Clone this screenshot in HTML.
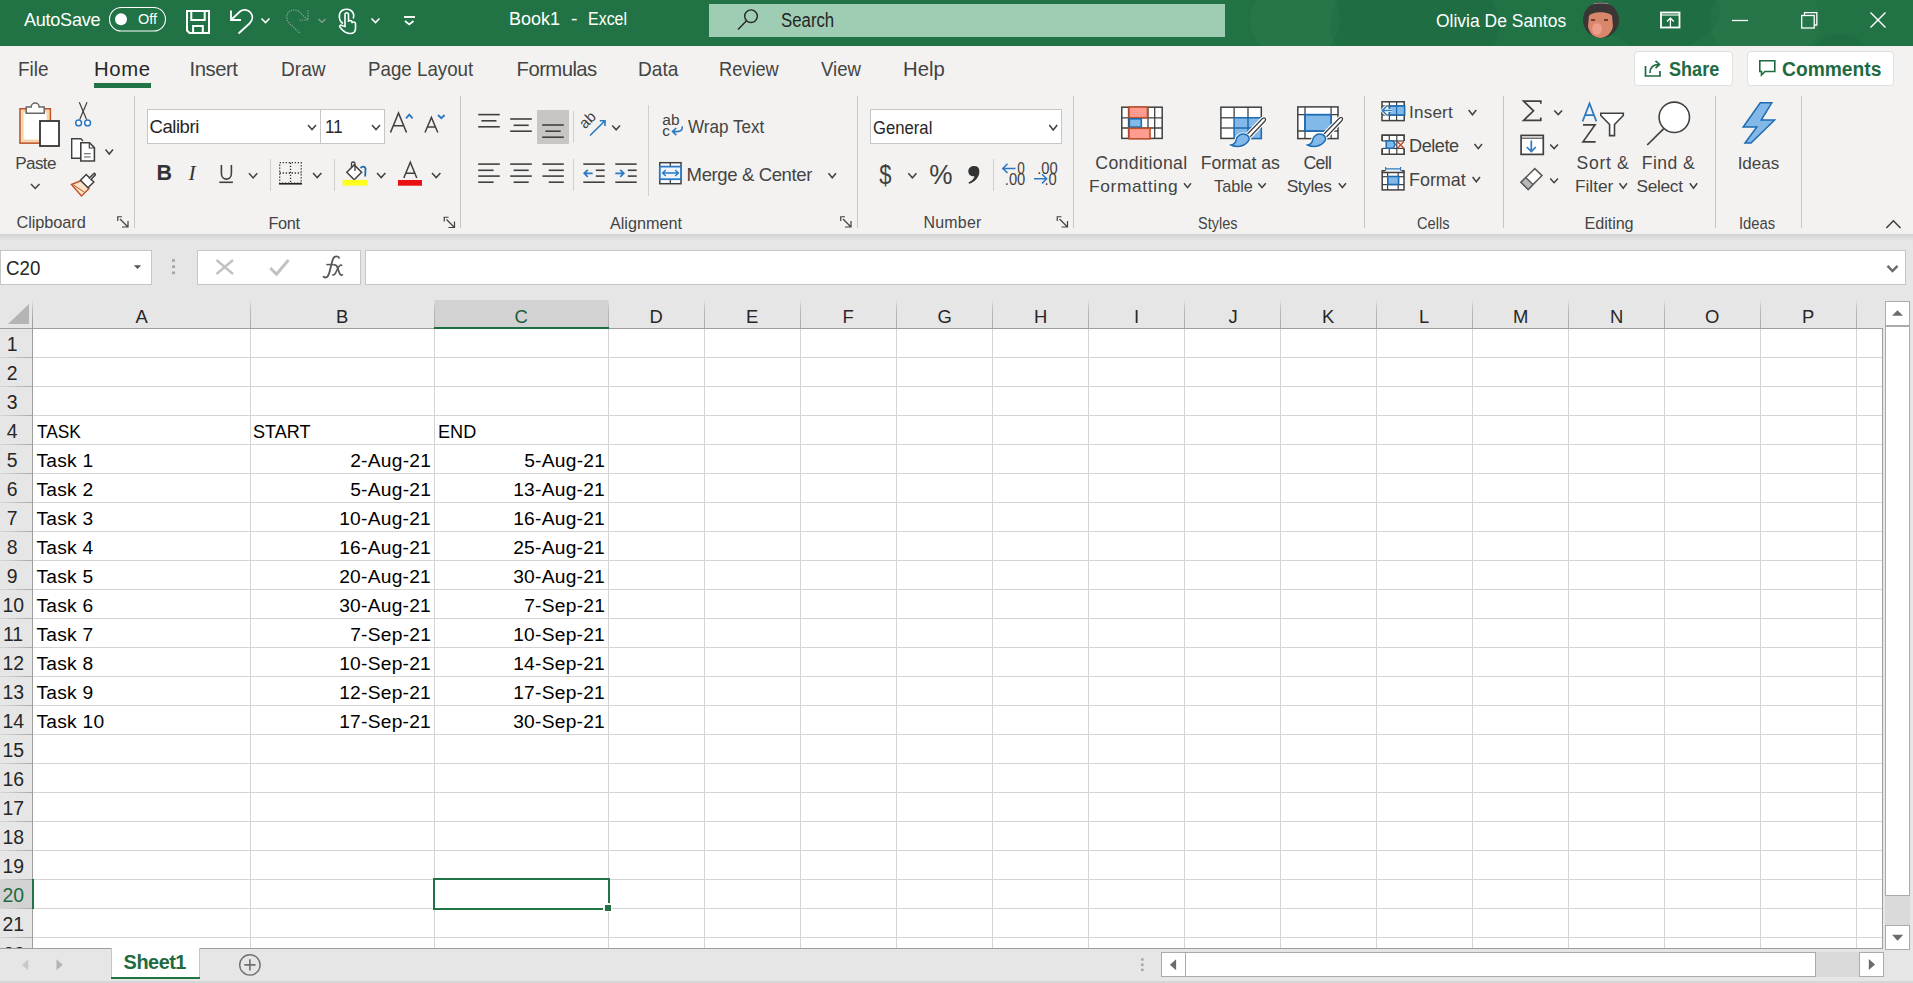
<!DOCTYPE html><html><head><meta charset="utf-8"><title>Book1 - Excel</title><style>html,body{margin:0;padding:0;width:1913px;height:983px;overflow:hidden;position:relative;background:#e6e6e6;font-family:"Liberation Sans",sans-serif}.t{position:absolute;white-space:pre}svg{position:absolute;overflow:visible}</style></head><body>
<div style="position:absolute;left:0px;top:0px;width:1913px;height:46px;background:#217346"></div>
<div style="position:absolute;left:1230px;top:0;width:683px;height:46px;overflow:hidden"><div style="position:absolute;left:20px;top:-20px;width:90px;height:80px;border-radius:50%;background:rgba(255,255,255,0.025)"></div><div style="position:absolute;left:100px;top:-30px;width:170px;height:110px;border-radius:50%;background:rgba(0,0,0,0.04)"></div><div style="position:absolute;left:370px;top:-30px;width:120px;height:80px;border-radius:50%;background:rgba(0,0,0,0.04)"></div><div style="position:absolute;left:480px;top:-25px;width:110px;height:90px;border-radius:50%;background:rgba(255,255,255,0.025)"></div><div style="position:absolute;left:585px;top:34px;width:50px;height:30px;border-radius:50%;background:rgba(0,0,0,0.04)"></div></div>
<div style="position:absolute;left:709px;top:4px;width:516px;height:33px;background:#9fcdb3"></div>
<div style="position:absolute;left:0px;top:46px;width:1913px;height:188px;background:#f3f2f1"></div>
<div style="position:absolute;left:0px;top:234px;width:1913px;height:7px;background:linear-gradient(#d2d2d2,#e6e6e6)"></div>
<div style="position:absolute;left:0px;top:241px;width:1913px;height:59px;background:#e6e6e6"></div>
<div style="position:absolute;left:134px;top:96px;width:1px;height:132px;background:#c8c6c4"></div>
<div style="position:absolute;left:460px;top:96px;width:1px;height:132px;background:#c8c6c4"></div>
<div style="position:absolute;left:857px;top:96px;width:1px;height:132px;background:#c8c6c4"></div>
<div style="position:absolute;left:1073px;top:96px;width:1px;height:132px;background:#c8c6c4"></div>
<div style="position:absolute;left:1364px;top:96px;width:1px;height:132px;background:#c8c6c4"></div>
<div style="position:absolute;left:1503px;top:96px;width:1px;height:132px;background:#c8c6c4"></div>
<div style="position:absolute;left:1715px;top:96px;width:1px;height:132px;background:#c8c6c4"></div>
<div style="position:absolute;left:1801px;top:96px;width:1px;height:132px;background:#c8c6c4"></div>
<div style="position:absolute;left:1634px;top:51px;width:99px;height:35px;background:#fff;border:1px solid #e1dfdd;border-radius:4px;box-sizing:border-box"></div>
<div style="position:absolute;left:1747px;top:51px;width:147px;height:35px;background:#fff;border:1px solid #e1dfdd;border-radius:4px;box-sizing:border-box"></div>
<div style="position:absolute;left:147px;top:109px;width:174px;height:35px;background:#fff;border:1px solid #c8c6c4;box-sizing:border-box"></div>
<div style="position:absolute;left:320px;top:109px;width:65px;height:35px;background:#fff;border:1px solid #c8c6c4;box-sizing:border-box"></div>
<div style="position:absolute;left:870px;top:109px;width:192px;height:35px;background:#fff;border:1px solid #c8c6c4;box-sizing:border-box"></div>
<div style="position:absolute;left:537px;top:110px;width:32px;height:34px;background:#c8c6c4"></div>
<div style="position:absolute;left:270px;top:159px;width:1px;height:32px;background:#d2d0ce"></div>
<div style="position:absolute;left:334px;top:159px;width:1px;height:32px;background:#d2d0ce"></div>
<div style="position:absolute;left:573px;top:111px;width:1px;height:32px;background:#d2d0ce"></div>
<div style="position:absolute;left:573px;top:159px;width:1px;height:32px;background:#d2d0ce"></div>
<div style="position:absolute;left:648px;top:105px;width:1px;height:91px;background:#d2d0ce"></div>
<div style="position:absolute;left:993px;top:159px;width:1px;height:32px;background:#d2d0ce"></div>
<div style="position:absolute;left:0px;top:250px;width:152px;height:35px;background:#fff;border:1px solid #c6c6c6;box-sizing:border-box"></div>
<div style="position:absolute;left:197px;top:250px;width:164px;height:35px;background:#fff;border:1px solid #c6c6c6;box-sizing:border-box"></div>
<div style="position:absolute;left:365px;top:250px;width:1541px;height:35px;background:#fff;border:1px solid #c6c6c6;box-sizing:border-box"></div>
<div style="position:absolute;left:33px;top:329px;width:1849px;height:619px;background:#fff"></div>
<div style="position:absolute;left:0px;top:300px;width:1882px;height:28px;background:#e6e6e6"></div>
<div style="position:absolute;left:434px;top:300px;width:175px;height:28px;background:#d2d2d2"></div>
<div style="position:absolute;left:0px;top:329px;width:32px;height:619px;background:#e6e6e6"></div>
<div style="position:absolute;left:0px;top:880px;width:32px;height:28px;background:#d2d2d2"></div>
<div style="position:absolute;left:250px;top:329px;width:1px;height:619px;background:#d4d4d4"></div>
<div style="position:absolute;left:434px;top:329px;width:1px;height:619px;background:#d4d4d4"></div>
<div style="position:absolute;left:608px;top:329px;width:1px;height:619px;background:#d4d4d4"></div>
<div style="position:absolute;left:704px;top:329px;width:1px;height:619px;background:#d4d4d4"></div>
<div style="position:absolute;left:800px;top:329px;width:1px;height:619px;background:#d4d4d4"></div>
<div style="position:absolute;left:896px;top:329px;width:1px;height:619px;background:#d4d4d4"></div>
<div style="position:absolute;left:992px;top:329px;width:1px;height:619px;background:#d4d4d4"></div>
<div style="position:absolute;left:1088px;top:329px;width:1px;height:619px;background:#d4d4d4"></div>
<div style="position:absolute;left:1184px;top:329px;width:1px;height:619px;background:#d4d4d4"></div>
<div style="position:absolute;left:1280px;top:329px;width:1px;height:619px;background:#d4d4d4"></div>
<div style="position:absolute;left:1376px;top:329px;width:1px;height:619px;background:#d4d4d4"></div>
<div style="position:absolute;left:1472px;top:329px;width:1px;height:619px;background:#d4d4d4"></div>
<div style="position:absolute;left:1568px;top:329px;width:1px;height:619px;background:#d4d4d4"></div>
<div style="position:absolute;left:1664px;top:329px;width:1px;height:619px;background:#d4d4d4"></div>
<div style="position:absolute;left:1760px;top:329px;width:1px;height:619px;background:#d4d4d4"></div>
<div style="position:absolute;left:1856px;top:329px;width:1px;height:619px;background:#d4d4d4"></div>
<div style="position:absolute;left:1856px;top:329px;width:1px;height:619px;background:#d4d4d4"></div>
<div style="position:absolute;left:250px;top:300px;width:1px;height:28px;background:linear-gradient(#e6e6e6,#bdbdbd 30%,#ababab)"></div>
<div style="position:absolute;left:434px;top:300px;width:1px;height:28px;background:linear-gradient(#e6e6e6,#bdbdbd 30%,#ababab)"></div>
<div style="position:absolute;left:608px;top:300px;width:1px;height:28px;background:linear-gradient(#e6e6e6,#bdbdbd 30%,#ababab)"></div>
<div style="position:absolute;left:704px;top:300px;width:1px;height:28px;background:linear-gradient(#e6e6e6,#bdbdbd 30%,#ababab)"></div>
<div style="position:absolute;left:800px;top:300px;width:1px;height:28px;background:linear-gradient(#e6e6e6,#bdbdbd 30%,#ababab)"></div>
<div style="position:absolute;left:896px;top:300px;width:1px;height:28px;background:linear-gradient(#e6e6e6,#bdbdbd 30%,#ababab)"></div>
<div style="position:absolute;left:992px;top:300px;width:1px;height:28px;background:linear-gradient(#e6e6e6,#bdbdbd 30%,#ababab)"></div>
<div style="position:absolute;left:1088px;top:300px;width:1px;height:28px;background:linear-gradient(#e6e6e6,#bdbdbd 30%,#ababab)"></div>
<div style="position:absolute;left:1184px;top:300px;width:1px;height:28px;background:linear-gradient(#e6e6e6,#bdbdbd 30%,#ababab)"></div>
<div style="position:absolute;left:1280px;top:300px;width:1px;height:28px;background:linear-gradient(#e6e6e6,#bdbdbd 30%,#ababab)"></div>
<div style="position:absolute;left:1376px;top:300px;width:1px;height:28px;background:linear-gradient(#e6e6e6,#bdbdbd 30%,#ababab)"></div>
<div style="position:absolute;left:1472px;top:300px;width:1px;height:28px;background:linear-gradient(#e6e6e6,#bdbdbd 30%,#ababab)"></div>
<div style="position:absolute;left:1568px;top:300px;width:1px;height:28px;background:linear-gradient(#e6e6e6,#bdbdbd 30%,#ababab)"></div>
<div style="position:absolute;left:1664px;top:300px;width:1px;height:28px;background:linear-gradient(#e6e6e6,#bdbdbd 30%,#ababab)"></div>
<div style="position:absolute;left:1760px;top:300px;width:1px;height:28px;background:linear-gradient(#e6e6e6,#bdbdbd 30%,#ababab)"></div>
<div style="position:absolute;left:1856px;top:300px;width:1px;height:28px;background:linear-gradient(#e6e6e6,#bdbdbd 30%,#ababab)"></div>
<div style="position:absolute;left:1856px;top:300px;width:1px;height:28px;background:linear-gradient(#e6e6e6,#bdbdbd 30%,#ababab)"></div>
<div style="position:absolute;left:33px;top:357px;width:1849px;height:1px;background:#d4d4d4"></div>
<div style="position:absolute;left:0px;top:357px;width:32px;height:1px;background:linear-gradient(90deg,#d8d8d8,#bdbdbd 60%,#ababab)"></div>
<div style="position:absolute;left:33px;top:386px;width:1849px;height:1px;background:#d4d4d4"></div>
<div style="position:absolute;left:0px;top:386px;width:32px;height:1px;background:linear-gradient(90deg,#d8d8d8,#bdbdbd 60%,#ababab)"></div>
<div style="position:absolute;left:33px;top:415px;width:1849px;height:1px;background:#d4d4d4"></div>
<div style="position:absolute;left:0px;top:415px;width:32px;height:1px;background:linear-gradient(90deg,#d8d8d8,#bdbdbd 60%,#ababab)"></div>
<div style="position:absolute;left:33px;top:444px;width:1849px;height:1px;background:#d4d4d4"></div>
<div style="position:absolute;left:0px;top:444px;width:32px;height:1px;background:linear-gradient(90deg,#d8d8d8,#bdbdbd 60%,#ababab)"></div>
<div style="position:absolute;left:33px;top:473px;width:1849px;height:1px;background:#d4d4d4"></div>
<div style="position:absolute;left:0px;top:473px;width:32px;height:1px;background:linear-gradient(90deg,#d8d8d8,#bdbdbd 60%,#ababab)"></div>
<div style="position:absolute;left:33px;top:502px;width:1849px;height:1px;background:#d4d4d4"></div>
<div style="position:absolute;left:0px;top:502px;width:32px;height:1px;background:linear-gradient(90deg,#d8d8d8,#bdbdbd 60%,#ababab)"></div>
<div style="position:absolute;left:33px;top:531px;width:1849px;height:1px;background:#d4d4d4"></div>
<div style="position:absolute;left:0px;top:531px;width:32px;height:1px;background:linear-gradient(90deg,#d8d8d8,#bdbdbd 60%,#ababab)"></div>
<div style="position:absolute;left:33px;top:560px;width:1849px;height:1px;background:#d4d4d4"></div>
<div style="position:absolute;left:0px;top:560px;width:32px;height:1px;background:linear-gradient(90deg,#d8d8d8,#bdbdbd 60%,#ababab)"></div>
<div style="position:absolute;left:33px;top:589px;width:1849px;height:1px;background:#d4d4d4"></div>
<div style="position:absolute;left:0px;top:589px;width:32px;height:1px;background:linear-gradient(90deg,#d8d8d8,#bdbdbd 60%,#ababab)"></div>
<div style="position:absolute;left:33px;top:618px;width:1849px;height:1px;background:#d4d4d4"></div>
<div style="position:absolute;left:0px;top:618px;width:32px;height:1px;background:linear-gradient(90deg,#d8d8d8,#bdbdbd 60%,#ababab)"></div>
<div style="position:absolute;left:33px;top:647px;width:1849px;height:1px;background:#d4d4d4"></div>
<div style="position:absolute;left:0px;top:647px;width:32px;height:1px;background:linear-gradient(90deg,#d8d8d8,#bdbdbd 60%,#ababab)"></div>
<div style="position:absolute;left:33px;top:676px;width:1849px;height:1px;background:#d4d4d4"></div>
<div style="position:absolute;left:0px;top:676px;width:32px;height:1px;background:linear-gradient(90deg,#d8d8d8,#bdbdbd 60%,#ababab)"></div>
<div style="position:absolute;left:33px;top:705px;width:1849px;height:1px;background:#d4d4d4"></div>
<div style="position:absolute;left:0px;top:705px;width:32px;height:1px;background:linear-gradient(90deg,#d8d8d8,#bdbdbd 60%,#ababab)"></div>
<div style="position:absolute;left:33px;top:734px;width:1849px;height:1px;background:#d4d4d4"></div>
<div style="position:absolute;left:0px;top:734px;width:32px;height:1px;background:linear-gradient(90deg,#d8d8d8,#bdbdbd 60%,#ababab)"></div>
<div style="position:absolute;left:33px;top:763px;width:1849px;height:1px;background:#d4d4d4"></div>
<div style="position:absolute;left:0px;top:763px;width:32px;height:1px;background:linear-gradient(90deg,#d8d8d8,#bdbdbd 60%,#ababab)"></div>
<div style="position:absolute;left:33px;top:792px;width:1849px;height:1px;background:#d4d4d4"></div>
<div style="position:absolute;left:0px;top:792px;width:32px;height:1px;background:linear-gradient(90deg,#d8d8d8,#bdbdbd 60%,#ababab)"></div>
<div style="position:absolute;left:33px;top:821px;width:1849px;height:1px;background:#d4d4d4"></div>
<div style="position:absolute;left:0px;top:821px;width:32px;height:1px;background:linear-gradient(90deg,#d8d8d8,#bdbdbd 60%,#ababab)"></div>
<div style="position:absolute;left:33px;top:850px;width:1849px;height:1px;background:#d4d4d4"></div>
<div style="position:absolute;left:0px;top:850px;width:32px;height:1px;background:linear-gradient(90deg,#d8d8d8,#bdbdbd 60%,#ababab)"></div>
<div style="position:absolute;left:33px;top:879px;width:1849px;height:1px;background:#d4d4d4"></div>
<div style="position:absolute;left:0px;top:879px;width:32px;height:1px;background:linear-gradient(90deg,#d8d8d8,#bdbdbd 60%,#ababab)"></div>
<div style="position:absolute;left:33px;top:908px;width:1849px;height:1px;background:#d4d4d4"></div>
<div style="position:absolute;left:0px;top:908px;width:32px;height:1px;background:linear-gradient(90deg,#d8d8d8,#bdbdbd 60%,#ababab)"></div>
<div style="position:absolute;left:33px;top:937px;width:1849px;height:1px;background:#d4d4d4"></div>
<div style="position:absolute;left:0px;top:937px;width:32px;height:1px;background:linear-gradient(90deg,#d8d8d8,#bdbdbd 60%,#ababab)"></div>
<div style="position:absolute;left:0px;top:328px;width:1882px;height:1px;background:#9e9e9e"></div>
<div style="position:absolute;left:32px;top:300px;width:1px;height:648px;background:linear-gradient(#e6e6e6,#c0c0c0 8px,#9e9e9e 22px,#9e9e9e)"></div>
<div style="position:absolute;left:0;top:938px;width:32px;height:10px;overflow:hidden"><div style="position:absolute;left:3.3px;top:6.3px;font:19.2px/19.2px Liberation Sans;color:#262626;white-space:pre">22</div></div>
<svg style="position:absolute;left:8px;top:304px" width="22" height="22"><polygon points="21,0 21,20 0,20" fill="#b4b4b4"/></svg>
<div style="position:absolute;left:434px;top:327px;width:175px;height:2px;background:#1f6e43"></div>
<div style="position:absolute;left:32px;top:879px;width:2px;height:30px;background:#217346"></div>
<div style="position:absolute;left:1882px;top:328px;width:1px;height:621px;background:#9e9e9e"></div>
<div style="position:absolute;left:0px;top:948px;width:1883px;height:1px;background:#9e9e9e"></div>
<div style="position:absolute;left:433px;top:878px;width:177px;height:32px;border:2px solid #217346;box-sizing:border-box"></div>
<div style="position:absolute;left:603px;top:903px;width:9px;height:9px;background:#fff"></div>
<div style="position:absolute;left:605px;top:905px;width:6px;height:6px;background:#217346"></div>
<div style="position:absolute;left:1883px;top:300px;width:30px;height:649px;background:#e6e6e6"></div>
<div style="position:absolute;left:1885px;top:301px;width:25px;height:25px;background:#fff;border:1px solid #ababab;box-sizing:border-box"></div>
<div style="position:absolute;left:1885px;top:326px;width:25px;height:570px;background:#fff;border:1px solid #ababab;box-sizing:border-box"></div>
<div style="position:absolute;left:1885px;top:896px;width:25px;height:30px;background:#dadada"></div>
<div style="position:absolute;left:1885px;top:925px;width:25px;height:25px;background:#fff;border:1px solid #ababab;box-sizing:border-box"></div>
<div style="position:absolute;left:0px;top:949px;width:1913px;height:34px;background:#e6e6e6"></div>
<div style="position:absolute;left:111px;top:948px;width:89px;height:31px;background:#fff;border-left:1px solid #c6c6c6;border-right:1px solid #c6c6c6;box-sizing:border-box"></div>
<div style="position:absolute;left:111px;top:977px;width:89px;height:2px;background:#217346"></div>
<div style="position:absolute;left:1161px;top:952px;width:25px;height:25px;background:#fff;border:1px solid #ababab;box-sizing:border-box"></div>
<div style="position:absolute;left:1185px;top:952px;width:631px;height:25px;background:#fff;border:1px solid #ababab;box-sizing:border-box"></div>
<div style="position:absolute;left:1816px;top:952px;width:43px;height:25px;background:#dadada"></div>
<div style="position:absolute;left:1859px;top:952px;width:25px;height:25px;background:#fff;border:1px solid #ababab;box-sizing:border-box"></div>
<div style="position:absolute;left:0px;top:981px;width:1913px;height:2px;background:#d6d6d6"></div>
<div style="position:absolute;left:1883px;top:949px;width:30px;height:1px;background:#e6e6e6"></div>
<div style="position:absolute;left:1885px;top:925px;width:25px;height:25px;background:#fff;border:1px solid #ababab;box-sizing:border-box"></div>
<div class="t" style="left:24.00px;top:10.60px;font-size:18.12px;line-height:18.12px;color:#ffffff;font-weight:400;letter-spacing:-0.286px;font-family:'Liberation Sans'">AutoSave</div>
<div class="t" style="left:138.00px;top:12.18px;font-size:14.49px;line-height:14.49px;color:#ffffff;font-weight:400;letter-spacing:0.0px;font-family:'Liberation Sans'">Off</div>
<div class="t" style="left:509.37px;top:8.61px;font-size:19.28px;line-height:19.28px;color:#ffffff;font-weight:400;transform:scaleX(0.9340);transform-origin:0 0;font-family:'Liberation Sans'">Book1</div>
<div class="t" style="left:571.00px;top:8.61px;font-size:19.28px;line-height:19.28px;color:#ffffff;font-weight:400;letter-spacing:0.0px;font-family:'Liberation Sans'">-</div>
<div class="t" style="left:587.57px;top:8.61px;font-size:19.28px;line-height:19.28px;color:#ffffff;font-weight:400;transform:scaleX(0.8289);transform-origin:0 0;font-family:'Liberation Sans'">Excel</div>
<div class="t" style="left:781.14px;top:11.37px;font-size:19.57px;line-height:19.57px;color:#262626;font-weight:400;transform:scaleX(0.8583);transform-origin:0 0;font-family:'Liberation Sans'">Search</div>
<div class="t" style="left:1436.07px;top:11.69px;font-size:18.84px;line-height:18.84px;color:#ffffff;font-weight:400;transform:scaleX(0.9281);transform-origin:0 0;font-family:'Liberation Sans'">Olivia De Santos</div>
<div class="t" style="left:18.06px;top:58.75px;font-size:20.29px;line-height:20.29px;color:#444;font-weight:400;transform:scaleX(0.9355);transform-origin:0 0;font-family:'Liberation Sans'">File</div>
<div class="t" style="left:189.50px;top:58.75px;font-size:20.29px;line-height:20.29px;color:#444;font-weight:400;letter-spacing:-0.46px;font-family:'Liberation Sans'">Insert</div>
<div class="t" style="left:280.76px;top:58.75px;font-size:20.29px;line-height:20.29px;color:#444;font-weight:400;transform:scaleX(0.9426);transform-origin:0 0;font-family:'Liberation Sans'">Draw</div>
<div class="t" style="left:367.68px;top:58.75px;font-size:20.29px;line-height:20.29px;color:#444;font-weight:400;transform:scaleX(0.9239);transform-origin:0 0;font-family:'Liberation Sans'">Page Layout</div>
<div class="t" style="left:516.60px;top:58.75px;font-size:20.29px;line-height:20.29px;color:#444;font-weight:400;letter-spacing:-0.557px;font-family:'Liberation Sans'">Formulas</div>
<div class="t" style="left:637.86px;top:58.75px;font-size:20.29px;line-height:20.29px;color:#444;font-weight:400;transform:scaleX(0.9405);transform-origin:0 0;font-family:'Liberation Sans'">Data</div>
<div class="t" style="left:718.80px;top:58.75px;font-size:20.29px;line-height:20.29px;color:#444;font-weight:400;transform:scaleX(0.8985);transform-origin:0 0;font-family:'Liberation Sans'">Review</div>
<div class="t" style="left:821.40px;top:58.75px;font-size:20.29px;line-height:20.29px;color:#444;font-weight:400;transform:scaleX(0.9182);transform-origin:0 0;font-family:'Liberation Sans'">View</div>
<div class="t" style="left:903.00px;top:58.75px;font-size:20.29px;line-height:20.29px;color:#444;font-weight:400;letter-spacing:0.0px;font-family:'Liberation Sans'">Help</div>
<div class="t" style="left:94.00px;top:58.75px;font-size:20.29px;line-height:20.29px;color:#262626;font-weight:400;letter-spacing:0.667px;font-family:'Liberation Sans'">Home</div>
<div class="t" style="left:1669.30px;top:58.75px;font-size:20.29px;line-height:20.29px;color:#1e6b41;font-weight:700;transform:scaleX(0.8911);transform-origin:0 0;font-family:'Liberation Sans'">Share</div>
<div class="t" style="left:1781.75px;top:58.75px;font-size:20.29px;line-height:20.29px;color:#1e6b41;font-weight:700;transform:scaleX(0.9485);transform-origin:0 0;font-family:'Liberation Sans'">Comments</div>
<div class="t" style="left:15.20px;top:154.97px;font-size:17.1px;line-height:17.1px;color:#444;font-weight:400;letter-spacing:-0.6px;font-family:'Liberation Sans'">Paste</div>
<div class="t" style="left:16.40px;top:214.08px;font-size:16.38px;line-height:16.38px;color:#444;font-weight:400;letter-spacing:-0.075px;font-family:'Liberation Sans'">Clipboard</div>
<div class="t" style="left:149.50px;top:118.03px;font-size:18.55px;line-height:18.55px;color:#262626;font-weight:400;letter-spacing:-0.45px;font-family:'Liberation Sans'">Calibri</div>
<div class="t" style="left:324.69px;top:118.03px;font-size:18.55px;line-height:18.55px;color:#262626;font-weight:400;transform:scaleX(0.9111);transform-origin:0 0;font-family:'Liberation Sans'">11</div>
<div class="t" style="left:268.50px;top:214.88px;font-size:16.38px;line-height:16.38px;color:#444;font-weight:400;letter-spacing:-0.4px;font-family:'Liberation Sans'">Font</div>
<div class="t" style="left:687.60px;top:118.11px;font-size:18.7px;line-height:18.7px;color:#444;font-weight:400;transform:scaleX(0.9131);transform-origin:0 0;font-family:'Liberation Sans'">Wrap Text</div>
<div class="t" style="left:686.60px;top:166.03px;font-size:18.55px;line-height:18.55px;color:#444;font-weight:400;letter-spacing:-0.392px;font-family:'Liberation Sans'">Merge &amp; Center</div>
<div class="t" style="left:610.00px;top:214.60px;font-size:16.23px;line-height:16.23px;color:#444;font-weight:400;letter-spacing:-0.025px;font-family:'Liberation Sans'">Alignment</div>
<div class="t" style="left:872.53px;top:117.71px;font-size:19.28px;line-height:19.28px;color:#262626;font-weight:400;transform:scaleX(0.8657);transform-origin:0 0;font-family:'Liberation Sans'">General</div>
<div class="t" style="left:923.60px;top:214.95px;font-size:15.94px;line-height:15.94px;color:#444;font-weight:400;letter-spacing:0.2px;font-family:'Liberation Sans'">Number</div>
<div class="t" style="left:1095.30px;top:154.97px;font-size:17.68px;line-height:17.68px;color:#444;font-weight:400;letter-spacing:0.35px;font-family:'Liberation Sans'">Conditional</div>
<div class="t" style="left:1089.00px;top:178.42px;font-size:17.39px;line-height:17.39px;color:#444;font-weight:400;letter-spacing:0.622px;font-family:'Liberation Sans'">Formatting</div>
<div class="t" style="left:1200.70px;top:154.97px;font-size:17.68px;line-height:17.68px;color:#444;font-weight:400;letter-spacing:-0.05px;font-family:'Liberation Sans'">Format as</div>
<div class="t" style="left:1213.50px;top:178.42px;font-size:17.39px;line-height:17.39px;color:#444;font-weight:400;transform:scaleX(0.9366);transform-origin:0 0;font-family:'Liberation Sans'">Table</div>
<div class="t" style="left:1303.40px;top:154.97px;font-size:17.68px;line-height:17.68px;color:#444;font-weight:400;letter-spacing:-0.6px;font-family:'Liberation Sans'">Cell</div>
<div class="t" style="left:1286.70px;top:178.42px;font-size:17.39px;line-height:17.39px;color:#444;font-weight:400;letter-spacing:-0.42px;font-family:'Liberation Sans'">Styles</div>
<div class="t" style="left:1197.71px;top:214.70px;font-size:16.23px;line-height:16.23px;color:#444;font-weight:400;transform:scaleX(0.8930);transform-origin:0 0;font-family:'Liberation Sans'">Styles</div>
<div class="t" style="left:1409.10px;top:104.06px;font-size:17.1px;line-height:17.1px;color:#444;font-weight:400;letter-spacing:0.16px;font-family:'Liberation Sans'">Insert</div>
<div class="t" style="left:1409.00px;top:137.10px;font-size:18.12px;line-height:18.12px;color:#444;font-weight:400;letter-spacing:-0.44px;font-family:'Liberation Sans'">Delete</div>
<div class="t" style="left:1409.00px;top:172.13px;font-size:17.97px;line-height:17.97px;color:#444;font-weight:400;letter-spacing:-0.02px;font-family:'Liberation Sans'">Format</div>
<div class="t" style="left:1416.59px;top:214.70px;font-size:16.23px;line-height:16.23px;color:#444;font-weight:400;transform:scaleX(0.9057);transform-origin:0 0;font-family:'Liberation Sans'">Cells</div>
<div class="t" style="left:1576.50px;top:154.79px;font-size:17.54px;line-height:17.54px;color:#444;font-weight:400;letter-spacing:0.72px;font-family:'Liberation Sans'">Sort &amp;</div>
<div class="t" style="left:1575.00px;top:178.24px;font-size:17.25px;line-height:17.25px;color:#444;font-weight:400;letter-spacing:-0.02px;font-family:'Liberation Sans'">Filter</div>
<div class="t" style="left:1641.80px;top:154.79px;font-size:17.54px;line-height:17.54px;color:#444;font-weight:400;letter-spacing:0.44px;font-family:'Liberation Sans'">Find &amp;</div>
<div class="t" style="left:1636.50px;top:178.24px;font-size:17.25px;line-height:17.25px;color:#444;font-weight:400;letter-spacing:-0.3px;font-family:'Liberation Sans'">Select</div>
<div class="t" style="left:1584.60px;top:214.70px;font-size:16.23px;line-height:16.23px;color:#444;font-weight:400;letter-spacing:-0.1px;font-family:'Liberation Sans'">Editing</div>
<div class="t" style="left:1737.70px;top:154.77px;font-size:17.1px;line-height:17.1px;color:#444;font-weight:400;letter-spacing:-0.075px;font-family:'Liberation Sans'">Ideas</div>
<div class="t" style="left:1739.39px;top:214.70px;font-size:16.23px;line-height:16.23px;color:#444;font-weight:400;transform:scaleX(0.9132);transform-origin:0 0;font-family:'Liberation Sans'">Ideas</div>
<div class="t" style="left:6.34px;top:259.37px;font-size:19.57px;line-height:19.57px;color:#262626;font-weight:400;transform:scaleX(0.9571);transform-origin:0 0;font-family:'Liberation Sans'">C20</div>
<div class="t" style="left:123.60px;top:953.32px;font-size:19.86px;line-height:19.86px;color:#1e6b41;font-weight:700;letter-spacing:-0.46px;font-family:'Liberation Sans'">Sheet1</div>
<div class="t" style="left:135.50px;top:307.75px;font-size:18.41px;line-height:18.41px;color:#262626;font-weight:400;letter-spacing:0.0px;font-family:'Liberation Sans'">A</div>
<div class="t" style="left:336.00px;top:307.75px;font-size:18.41px;line-height:18.41px;color:#262626;font-weight:400;letter-spacing:0.0px;font-family:'Liberation Sans'">B</div>
<div class="t" style="left:514.50px;top:307.75px;font-size:18.41px;line-height:18.41px;color:#1e5c3a;font-weight:400;letter-spacing:0.0px;font-family:'Liberation Sans'">C</div>
<div class="t" style="left:649.50px;top:307.75px;font-size:18.41px;line-height:18.41px;color:#262626;font-weight:400;letter-spacing:0.0px;font-family:'Liberation Sans'">D</div>
<div class="t" style="left:746.00px;top:307.75px;font-size:18.41px;line-height:18.41px;color:#262626;font-weight:400;letter-spacing:0.0px;font-family:'Liberation Sans'">E</div>
<div class="t" style="left:842.50px;top:307.75px;font-size:18.41px;line-height:18.41px;color:#262626;font-weight:400;letter-spacing:0.0px;font-family:'Liberation Sans'">F</div>
<div class="t" style="left:937.50px;top:307.75px;font-size:18.41px;line-height:18.41px;color:#262626;font-weight:400;letter-spacing:0.0px;font-family:'Liberation Sans'">G</div>
<div class="t" style="left:1034.00px;top:307.75px;font-size:18.41px;line-height:18.41px;color:#262626;font-weight:400;letter-spacing:0.0px;font-family:'Liberation Sans'">H</div>
<div class="t" style="left:1134.00px;top:307.75px;font-size:18.41px;line-height:18.41px;color:#262626;font-weight:400;letter-spacing:0.0px;font-family:'Liberation Sans'">I</div>
<div class="t" style="left:1228.50px;top:307.75px;font-size:18.41px;line-height:18.41px;color:#262626;font-weight:400;letter-spacing:0.0px;font-family:'Liberation Sans'">J</div>
<div class="t" style="left:1322.00px;top:307.75px;font-size:18.41px;line-height:18.41px;color:#262626;font-weight:400;letter-spacing:0.0px;font-family:'Liberation Sans'">K</div>
<div class="t" style="left:1419.00px;top:307.75px;font-size:18.41px;line-height:18.41px;color:#262626;font-weight:400;letter-spacing:0.0px;font-family:'Liberation Sans'">L</div>
<div class="t" style="left:1513.00px;top:307.75px;font-size:18.41px;line-height:18.41px;color:#262626;font-weight:400;letter-spacing:0.0px;font-family:'Liberation Sans'">M</div>
<div class="t" style="left:1610.00px;top:307.75px;font-size:18.41px;line-height:18.41px;color:#262626;font-weight:400;letter-spacing:0.0px;font-family:'Liberation Sans'">N</div>
<div class="t" style="left:1705.00px;top:307.75px;font-size:18.41px;line-height:18.41px;color:#262626;font-weight:400;letter-spacing:0.0px;font-family:'Liberation Sans'">O</div>
<div class="t" style="left:1802.00px;top:307.75px;font-size:18.41px;line-height:18.41px;color:#262626;font-weight:400;letter-spacing:0.0px;font-family:'Liberation Sans'">P</div>
<div class="t" style="left:6.80px;top:334.89px;font-size:19.42px;line-height:19.42px;color:#262626;font-weight:400;letter-spacing:0.0px;font-family:'Liberation Sans'">1</div>
<div class="t" style="left:6.80px;top:363.89px;font-size:19.42px;line-height:19.42px;color:#262626;font-weight:400;letter-spacing:0.0px;font-family:'Liberation Sans'">2</div>
<div class="t" style="left:6.80px;top:392.89px;font-size:19.42px;line-height:19.42px;color:#262626;font-weight:400;letter-spacing:0.0px;font-family:'Liberation Sans'">3</div>
<div class="t" style="left:6.80px;top:421.89px;font-size:19.42px;line-height:19.42px;color:#262626;font-weight:400;letter-spacing:0.0px;font-family:'Liberation Sans'">4</div>
<div class="t" style="left:6.80px;top:450.89px;font-size:19.42px;line-height:19.42px;color:#262626;font-weight:400;letter-spacing:0.0px;font-family:'Liberation Sans'">5</div>
<div class="t" style="left:6.80px;top:479.89px;font-size:19.42px;line-height:19.42px;color:#262626;font-weight:400;letter-spacing:0.0px;font-family:'Liberation Sans'">6</div>
<div class="t" style="left:6.80px;top:508.89px;font-size:19.42px;line-height:19.42px;color:#262626;font-weight:400;letter-spacing:0.0px;font-family:'Liberation Sans'">7</div>
<div class="t" style="left:6.80px;top:537.89px;font-size:19.42px;line-height:19.42px;color:#262626;font-weight:400;letter-spacing:0.0px;font-family:'Liberation Sans'">8</div>
<div class="t" style="left:6.80px;top:566.89px;font-size:19.42px;line-height:19.42px;color:#262626;font-weight:400;letter-spacing:0.0px;font-family:'Liberation Sans'">9</div>
<div class="t" style="left:2.50px;top:595.89px;font-size:19.42px;line-height:19.42px;color:#262626;font-weight:400;letter-spacing:0.0px;font-family:'Liberation Sans'">10</div>
<div class="t" style="left:3.00px;top:624.89px;font-size:19.42px;line-height:19.42px;color:#262626;font-weight:400;letter-spacing:0.0px;font-family:'Liberation Sans'">11</div>
<div class="t" style="left:2.50px;top:653.89px;font-size:19.42px;line-height:19.42px;color:#262626;font-weight:400;letter-spacing:0.0px;font-family:'Liberation Sans'">12</div>
<div class="t" style="left:2.50px;top:682.89px;font-size:19.42px;line-height:19.42px;color:#262626;font-weight:400;letter-spacing:0.0px;font-family:'Liberation Sans'">13</div>
<div class="t" style="left:2.50px;top:711.89px;font-size:19.42px;line-height:19.42px;color:#262626;font-weight:400;letter-spacing:0.0px;font-family:'Liberation Sans'">14</div>
<div class="t" style="left:2.50px;top:740.89px;font-size:19.42px;line-height:19.42px;color:#262626;font-weight:400;letter-spacing:0.0px;font-family:'Liberation Sans'">15</div>
<div class="t" style="left:2.50px;top:769.89px;font-size:19.42px;line-height:19.42px;color:#262626;font-weight:400;letter-spacing:0.0px;font-family:'Liberation Sans'">16</div>
<div class="t" style="left:2.50px;top:798.89px;font-size:19.42px;line-height:19.42px;color:#262626;font-weight:400;letter-spacing:0.0px;font-family:'Liberation Sans'">17</div>
<div class="t" style="left:2.50px;top:827.89px;font-size:19.42px;line-height:19.42px;color:#262626;font-weight:400;letter-spacing:0.0px;font-family:'Liberation Sans'">18</div>
<div class="t" style="left:2.50px;top:856.89px;font-size:19.42px;line-height:19.42px;color:#262626;font-weight:400;letter-spacing:0.0px;font-family:'Liberation Sans'">19</div>
<div class="t" style="left:2.50px;top:885.89px;font-size:19.42px;line-height:19.42px;color:#1e6b41;font-weight:400;letter-spacing:0.0px;font-family:'Liberation Sans'">20</div>
<div class="t" style="left:2.50px;top:914.89px;font-size:19.42px;line-height:19.42px;color:#262626;font-weight:400;letter-spacing:0.0px;font-family:'Liberation Sans'">21</div>
<div class="t" style="left:36.80px;top:421.68px;font-size:19.2px;line-height:19.2px;color:#000;font-weight:400;transform:scaleX(0.9020);transform-origin:0 0;font-family:'Liberation Sans'">TASK</div>
<div class="t" style="left:253.16px;top:421.68px;font-size:19.2px;line-height:19.2px;color:#000;font-weight:400;transform:scaleX(0.9400);transform-origin:0 0;font-family:'Liberation Sans'">START</div>
<div class="t" style="left:438.26px;top:421.68px;font-size:19.2px;line-height:19.2px;color:#000;font-weight:400;transform:scaleX(0.9436);transform-origin:0 0;font-family:'Liberation Sans'">END</div>
<div class="t" style="left:36.50px;top:450.68px;font-size:19.2px;line-height:19.2px;color:#000;font-weight:400;letter-spacing:0.25px;font-family:'Liberation Sans'">Task 1</div>
<div class="t" style="left:350.20px;top:450.68px;font-size:19.2px;line-height:19.2px;color:#000;font-weight:400;letter-spacing:0.25px;font-family:'Liberation Sans'">2-Aug-21</div>
<div class="t" style="left:524.20px;top:450.68px;font-size:19.2px;line-height:19.2px;color:#000;font-weight:400;letter-spacing:0.25px;font-family:'Liberation Sans'">5-Aug-21</div>
<div class="t" style="left:36.50px;top:479.68px;font-size:19.2px;line-height:19.2px;color:#000;font-weight:400;letter-spacing:0.25px;font-family:'Liberation Sans'">Task 2</div>
<div class="t" style="left:350.20px;top:479.68px;font-size:19.2px;line-height:19.2px;color:#000;font-weight:400;letter-spacing:0.25px;font-family:'Liberation Sans'">5-Aug-21</div>
<div class="t" style="left:513.20px;top:479.68px;font-size:19.2px;line-height:19.2px;color:#000;font-weight:400;letter-spacing:0.25px;font-family:'Liberation Sans'">13-Aug-21</div>
<div class="t" style="left:36.50px;top:508.68px;font-size:19.2px;line-height:19.2px;color:#000;font-weight:400;letter-spacing:0.25px;font-family:'Liberation Sans'">Task 3</div>
<div class="t" style="left:339.20px;top:508.68px;font-size:19.2px;line-height:19.2px;color:#000;font-weight:400;letter-spacing:0.25px;font-family:'Liberation Sans'">10-Aug-21</div>
<div class="t" style="left:513.20px;top:508.68px;font-size:19.2px;line-height:19.2px;color:#000;font-weight:400;letter-spacing:0.25px;font-family:'Liberation Sans'">16-Aug-21</div>
<div class="t" style="left:36.50px;top:537.68px;font-size:19.2px;line-height:19.2px;color:#000;font-weight:400;letter-spacing:0.25px;font-family:'Liberation Sans'">Task 4</div>
<div class="t" style="left:339.20px;top:537.68px;font-size:19.2px;line-height:19.2px;color:#000;font-weight:400;letter-spacing:0.25px;font-family:'Liberation Sans'">16-Aug-21</div>
<div class="t" style="left:513.20px;top:537.68px;font-size:19.2px;line-height:19.2px;color:#000;font-weight:400;letter-spacing:0.25px;font-family:'Liberation Sans'">25-Aug-21</div>
<div class="t" style="left:36.50px;top:566.68px;font-size:19.2px;line-height:19.2px;color:#000;font-weight:400;letter-spacing:0.25px;font-family:'Liberation Sans'">Task 5</div>
<div class="t" style="left:339.20px;top:566.68px;font-size:19.2px;line-height:19.2px;color:#000;font-weight:400;letter-spacing:0.25px;font-family:'Liberation Sans'">20-Aug-21</div>
<div class="t" style="left:513.20px;top:566.68px;font-size:19.2px;line-height:19.2px;color:#000;font-weight:400;letter-spacing:0.25px;font-family:'Liberation Sans'">30-Aug-21</div>
<div class="t" style="left:36.50px;top:595.68px;font-size:19.2px;line-height:19.2px;color:#000;font-weight:400;letter-spacing:0.25px;font-family:'Liberation Sans'">Task 6</div>
<div class="t" style="left:339.20px;top:595.68px;font-size:19.2px;line-height:19.2px;color:#000;font-weight:400;letter-spacing:0.25px;font-family:'Liberation Sans'">30-Aug-21</div>
<div class="t" style="left:524.20px;top:595.68px;font-size:19.2px;line-height:19.2px;color:#000;font-weight:400;letter-spacing:0.25px;font-family:'Liberation Sans'">7-Sep-21</div>
<div class="t" style="left:36.50px;top:624.68px;font-size:19.2px;line-height:19.2px;color:#000;font-weight:400;letter-spacing:0.25px;font-family:'Liberation Sans'">Task 7</div>
<div class="t" style="left:350.20px;top:624.68px;font-size:19.2px;line-height:19.2px;color:#000;font-weight:400;letter-spacing:0.25px;font-family:'Liberation Sans'">7-Sep-21</div>
<div class="t" style="left:513.20px;top:624.68px;font-size:19.2px;line-height:19.2px;color:#000;font-weight:400;letter-spacing:0.25px;font-family:'Liberation Sans'">10-Sep-21</div>
<div class="t" style="left:36.50px;top:653.68px;font-size:19.2px;line-height:19.2px;color:#000;font-weight:400;letter-spacing:0.25px;font-family:'Liberation Sans'">Task 8</div>
<div class="t" style="left:339.20px;top:653.68px;font-size:19.2px;line-height:19.2px;color:#000;font-weight:400;letter-spacing:0.25px;font-family:'Liberation Sans'">10-Sep-21</div>
<div class="t" style="left:513.20px;top:653.68px;font-size:19.2px;line-height:19.2px;color:#000;font-weight:400;letter-spacing:0.25px;font-family:'Liberation Sans'">14-Sep-21</div>
<div class="t" style="left:36.50px;top:682.68px;font-size:19.2px;line-height:19.2px;color:#000;font-weight:400;letter-spacing:0.25px;font-family:'Liberation Sans'">Task 9</div>
<div class="t" style="left:339.20px;top:682.68px;font-size:19.2px;line-height:19.2px;color:#000;font-weight:400;letter-spacing:0.25px;font-family:'Liberation Sans'">12-Sep-21</div>
<div class="t" style="left:513.20px;top:682.68px;font-size:19.2px;line-height:19.2px;color:#000;font-weight:400;letter-spacing:0.25px;font-family:'Liberation Sans'">17-Sep-21</div>
<div class="t" style="left:36.50px;top:711.68px;font-size:19.2px;line-height:19.2px;color:#000;font-weight:400;letter-spacing:0.25px;font-family:'Liberation Sans'">Task 10</div>
<div class="t" style="left:339.20px;top:711.68px;font-size:19.2px;line-height:19.2px;color:#000;font-weight:400;letter-spacing:0.25px;font-family:'Liberation Sans'">17-Sep-21</div>
<div class="t" style="left:513.20px;top:711.68px;font-size:19.2px;line-height:19.2px;color:#000;font-weight:400;letter-spacing:0.25px;font-family:'Liberation Sans'">30-Sep-21</div>
<svg width="1913" height="983" style="position:absolute;left:0;top:0"><rect x="109.5" y="7.5" width="56" height="23.5" stroke="#ffffff" stroke-width="1.1" fill="none" rx="11.75"/>
<circle cx="121" cy="19.2" r="6" fill="#fff"/>
<path d="M187,11 H209 V33 H189.5 L187,30.5 Z" stroke="#ffffff" stroke-width="2" fill="none" />
<path d="M191.3,11 V20.1 H204.7 V11" stroke="#ffffff" stroke-width="2" fill="none" />
<path d="M193.1,33 V26.1 H202.8 V33" stroke="#ffffff" stroke-width="2" fill="none" />
<path d="M231,10.5 V20 H241" stroke="#ffffff" stroke-width="1.8" fill="none" />
<path d="M231.5,19.5 L240,11.5 C243,9 248,9.3 250.5,12.5 C253.5,16 252.5,20.5 249.5,23.5 L238.5,33.5" stroke="#ffffff" stroke-width="1.8" fill="none" />
<polyline points="261.5,18.5 265.5,22.5 269.5,18.5" fill="none" stroke="#ffffff" stroke-width="1.6"/>
<path d="M308,10.5 V20 H298.5" stroke="#8fa89a" stroke-width="1.2" fill="none" stroke-dasharray="1.2 1.2"/>
<path d="M307.5,19.5 L299,11.5 C296,9 291,9.3 288.5,12.5 C285.5,16 286.5,20.5 289.5,23.5 L300.5,33.5" stroke="#8fa89a" stroke-width="1.2" fill="none" stroke-dasharray="1.2 1.2"/>
<polyline points="318.5,19 322.0,22.5 325.5,19" fill="none" stroke="#8fa89a" stroke-width="1.1"/>
<path d="M343,23.5 C338.5,21 338,13 342.5,10.3 C346.5,8 352,9.5 353.5,14 C354,15.5 354,17 353.2,18.5" stroke="#ffffff" stroke-width="1.6" fill="none" />
<path d="M345,26.5 V14.5 C345,12.2 348.5,12.2 348.5,14.5 V22 C348.5,20 352,20 352,22 V23.2 C352,21.5 355.5,21.5 355.5,23.5 V28.5 C355.5,32 353,33.5 350,33.5 C346.5,33.5 345,32.5 342.5,30 L340,27.2 C339,26 340.5,24.5 342,25.5 Z" stroke="#ffffff" stroke-width="1.6" fill="none" />
<polyline points="371.5,18.5 375.5,22.5 379.5,18.5" fill="none" stroke="#ffffff" stroke-width="1.6"/>
<line x1="404" y1="17" x2="415" y2="17" stroke="#ffffff" stroke-width="1.9" />
<polyline points="405,21 409.25,24.5 413.5,21" fill="none" stroke="#ffffff" stroke-width="1.7"/>
<circle cx="751" cy="16.2" r="6.3" fill="none" stroke="#262626" stroke-width="1.4"/>
<line x1="746.5" y1="20.8" x2="738" y2="29.5" stroke="#262626" stroke-width="1.4" />
<defs><clipPath id="av"><circle cx="1601" cy="20" r="18"/></clipPath></defs>
<g clip-path="url(#av)"><rect x="1583" y="2" width="36" height="36" fill="#3b3636"/><path d="M1589,16 C1592,11 1609,11 1612,16 L1613,26 C1612,33 1606,38 1600,38 C1594,38 1589,33 1588,26 Z" fill="#d9876a"/><ellipse cx="1597" cy="29" rx="5" ry="6" fill="#ee9c8c"/><path d="M1591,20 h4 M1604,20 h4" stroke="#4a2a20" stroke-width="1.5"/><path d="M1586,6 C1592,2 1610,2 1616,6" stroke="#9a9a9a" stroke-width="1.2" fill="none"/></g>
<rect x="1661" y="12.5" width="18.5" height="15" stroke="#ffffff" stroke-width="1.8" fill="none" />
<line x1="1661" y1="15" x2="1679.5" y2="15" stroke="#ffffff" stroke-width="1.1" />
<line x1="1670.4" y1="18.5" x2="1670.4" y2="27.5" stroke="#ffffff" stroke-width="1.3" />
<path d="M1667,21.5 L1670.4,18.2 L1673.8,21.5" stroke="#ffffff" stroke-width="1.3" fill="none" />
<line x1="1732" y1="20.5" x2="1748" y2="20.5" stroke="#ffffff" stroke-width="1.3" />
<rect x="1801.7" y="15.5" width="12.5" height="12.5" stroke="#ffffff" stroke-width="1.3" fill="none" />
<path d="M1804.5,15.5 V12.7 H1816.8 V25 H1814.2" stroke="#ffffff" stroke-width="1.3" fill="none" />
<line x1="1870.5" y1="12.5" x2="1885.5" y2="27.5" stroke="#ffffff" stroke-width="1.4" />
<line x1="1885.5" y1="12.5" x2="1870.5" y2="27.5" stroke="#ffffff" stroke-width="1.4" />
<rect x="94" y="83" width="57" height="5" stroke="none" stroke-width="0" fill="#217346" />
<path d="M1645.5,66 V76 H1660 V71" stroke="#1e6b41" stroke-width="1.7" fill="none" />
<path d="M1650,73 C1650,67 1653.5,64.5 1659,64.5 M1655.5,60.8 L1659.5,64.5 L1655.5,68.2" stroke="#1e6b41" stroke-width="1.7" fill="none" />
<path d="M1759.8,60.8 H1774.8 V71.5 H1765 L1761.5,75 V71.5 H1759.8 Z" stroke="#1e6b41" stroke-width="1.6" fill="none" />
<rect x="20" y="108.8" width="30.3" height="34.3" stroke="#c0502a" stroke-width="1.6" fill="#fff" />
<rect x="22.4" y="111.2" width="25.5" height="29.5" stroke="#f6d4a4" stroke-width="2.4" fill="none" />
<path d="M26.2,113.2 V107 H31.2 A4,4 0 0 1 39.2,107 H44.2 V113.2 Z" stroke="#666" stroke-width="1.5" fill="#fff" />
<rect x="40" y="121" width="19" height="25" stroke="#333" stroke-width="1.8" fill="#fff" />
<polyline points="31,184 35.25,188.5 39.5,184" fill="none" stroke="#404040" stroke-width="1.5"/>
<line x1="79.3" y1="102.2" x2="86.6" y2="119.5" stroke="#404040" stroke-width="1.2" />
<line x1="87" y1="102.2" x2="79.7" y2="119.5" stroke="#404040" stroke-width="1.2" />
<circle cx="78.6" cy="122.9" r="2.9" fill="#fff" stroke="#2b79c2" stroke-width="1.5"/>
<circle cx="87.6" cy="122.9" r="2.9" fill="#fff" stroke="#2b79c2" stroke-width="1.5"/>
<path d="M80.3,158.2 H71.7 V138.8 H80.8 L83,141" stroke="#404040" stroke-width="1.4" fill="#fff" />
<path d="M80.8,142.8 H89.5 L94.4,147.7 V161 H80.8 Z" stroke="#404040" stroke-width="1.6" fill="#fff" />
<path d="M89.3,142.8 V148 H94.4" stroke="#404040" stroke-width="1.2" fill="none" />
<line x1="84" y1="153.7" x2="90.7" y2="153.7" stroke="#666" stroke-width="1.1" />
<line x1="84" y1="157" x2="90.7" y2="157" stroke="#666" stroke-width="1.1" />
<polyline points="105.5,149.5 109.25,154 113,149.5" fill="none" stroke="#404040" stroke-width="1.5"/>
<path d="M71.5,184.5 L81,180.5 L89,188.5 L81.5,196 Z" stroke="#c0502a" stroke-width="1.4" fill="#fbe3c8" />
<path d="M73.5,185 L84,192 " stroke="#c0502a" stroke-width="1.0" fill="none" />
<path d="M80.5,180.2 L86.2,174.5 L93.8,182 L88,187.8 Z" stroke="#404040" stroke-width="1.5" fill="#fff" />
<path d="M88.8,178.5 L93.6,173.7 C94.5,172.8 96,174.2 95.1,175.1 L90.3,180" stroke="#404040" stroke-width="1.5" fill="#fff" />
<path d="M117.75,221 V216.75 H122" stroke="#404040" stroke-width="1.2" fill="none" /><path d="M120,219 L128,227 M122,227 H128 V221" stroke="#404040" stroke-width="1.2" fill="none" />
<path d="M444.25,221.5 V217.25 H448.5" stroke="#404040" stroke-width="1.2" fill="none" /><path d="M446.5,219.5 L454.5,227.5 M448.5,227.5 H454.5 V221.5" stroke="#404040" stroke-width="1.2" fill="none" />
<path d="M840.75,221 V216.75 H845" stroke="#404040" stroke-width="1.2" fill="none" /><path d="M843,219 L851,227 M845,227 H851 V221" stroke="#404040" stroke-width="1.2" fill="none" />
<path d="M1057.25,221 V216.75 H1061.5" stroke="#404040" stroke-width="1.2" fill="none" /><path d="M1059.5,219 L1067.5,227 M1061.5,227 H1067.5 V221" stroke="#404040" stroke-width="1.2" fill="none" />
<polyline points="308,125 312.0,129.5 316,125" fill="none" stroke="#404040" stroke-width="1.5"/>
<polyline points="372,125 376.0,129.5 380,125" fill="none" stroke="#404040" stroke-width="1.5"/>
<path d="M390.5,132.5 L398.5,113 L406.5,132.5 M393,125.7 H404" stroke="#404040" stroke-width="1.6" fill="none" />
<polyline points="406,118.4 409.3,114.7 412.6,118.4" fill="none" stroke="#2b79c2" stroke-width="1.9"/>
<path d="M425,132.5 L431.4,117.4 L437.8,132.5 M427,127 H435.8" stroke="#404040" stroke-width="1.5" fill="none" />
<polyline points="438,115 441.3,118.2 444.6,115" fill="none" stroke="#2b79c2" stroke-width="1.9"/>
<text x="156.4" y="180.2" font-family="Liberation Sans" font-size="21.5" font-weight="700" fill="#333" >B</text>
<text x="188.5" y="180" font-family="Liberation Serif" font-size="21.5" font-weight="400" fill="#333" font-style="italic">I</text>
<path d="M221.4,165 V173.5 C221.4,181 231.4,181 231.4,173.5 V165" stroke="#404040" stroke-width="1.6" fill="none" />
<line x1="219.3" y1="182.3" x2="232.9" y2="182.3" stroke="#404040" stroke-width="1.6" />
<polyline points="249,173.2 253.15,177.9 257.3,173.2" fill="none" stroke="#404040" stroke-width="1.5"/>
<g stroke="#333" stroke-width="1.3" stroke-dasharray="1.3 1.7" fill="none"><rect x="279.7" y="162.7" width="21.5" height="20.5"/><line x1="290.5" y1="162.7" x2="290.5" y2="183"/><line x1="279.7" y1="173" x2="301.2" y2="173"/></g>
<line x1="279" y1="183.8" x2="302" y2="183.8" stroke="#222" stroke-width="1.6" />
<polyline points="313,173 317.2,177.6 321.4,173" fill="none" stroke="#404040" stroke-width="1.5"/>
<path d="M346.8,172.3 L354.2,164.9 L361.6,172.3 L354.2,179.7 Z" stroke="#404040" stroke-width="1.5" fill="#fff" />
<path d="M351.5,167.5 V163.5 C351.5,161.5 355,161.5 355,163.5 V171" stroke="#404040" stroke-width="1.3" fill="none" />
<path d="M360.5,168 C362.5,166 365,166.5 365.5,168.5 L365.2,176.5" stroke="#1f6bb0" stroke-width="1.8" fill="none" />
<rect x="342.6" y="179.9" width="25" height="5.7" stroke="none" stroke-width="0" fill="#ffff1e" />
<polyline points="377,173 381.2,177.6 385.4,173" fill="none" stroke="#404040" stroke-width="1.5"/>
<path d="M403.8,178 L410.3,162.2 L416.8,178 M406,173.3 H414.6" stroke="#404040" stroke-width="1.5" fill="none" />
<rect x="398" y="180" width="24" height="5.7" stroke="none" stroke-width="0" fill="#e81010" />
<polyline points="432,173 436.2,177.6 440.4,173" fill="none" stroke="#404040" stroke-width="1.5"/>
<line x1="478.2" y1="114.6" x2="499.8" y2="114.6" stroke="#404040" stroke-width="1.6" /><line x1="481.4" y1="120.8" x2="496.5" y2="120.8" stroke="#404040" stroke-width="1.6" /><line x1="478.2" y1="126.8" x2="499.8" y2="126.8" stroke="#404040" stroke-width="1.6" />
<line x1="510.2" y1="119" x2="531.8" y2="119" stroke="#404040" stroke-width="1.6" /><line x1="513.6" y1="125.3" x2="528.7" y2="125.3" stroke="#404040" stroke-width="1.6" /><line x1="510.2" y1="131.2" x2="531.8" y2="131.2" stroke="#404040" stroke-width="1.6" />
<line x1="542.2" y1="125" x2="563.8" y2="125" stroke="#404040" stroke-width="1.6" /><line x1="545.4" y1="131.2" x2="560.7" y2="131.2" stroke="#404040" stroke-width="1.6" /><line x1="542.2" y1="137.2" x2="563.8" y2="137.2" stroke="#404040" stroke-width="1.6" />
<line x1="478.2" y1="164.1" x2="499.8" y2="164.1" stroke="#404040" stroke-width="1.6" /><line x1="478.2" y1="170.3" x2="493.6" y2="170.3" stroke="#404040" stroke-width="1.6" /><line x1="478.2" y1="176.1" x2="499.8" y2="176.1" stroke="#404040" stroke-width="1.6" /><line x1="478.2" y1="182.2" x2="493.6" y2="182.2" stroke="#404040" stroke-width="1.6" />
<line x1="510.2" y1="164.1" x2="531.8" y2="164.1" stroke="#404040" stroke-width="1.6" /><line x1="513.6" y1="170.3" x2="528.7" y2="170.3" stroke="#404040" stroke-width="1.6" /><line x1="510.2" y1="176.1" x2="531.8" y2="176.1" stroke="#404040" stroke-width="1.6" /><line x1="513.6" y1="182.2" x2="528.7" y2="182.2" stroke="#404040" stroke-width="1.6" />
<line x1="542.4" y1="164.1" x2="563.8" y2="164.1" stroke="#404040" stroke-width="1.6" /><line x1="548.7" y1="170.3" x2="563.8" y2="170.3" stroke="#404040" stroke-width="1.6" /><line x1="542.4" y1="176.1" x2="563.8" y2="176.1" stroke="#404040" stroke-width="1.6" /><line x1="548.7" y1="182.2" x2="563.8" y2="182.2" stroke="#404040" stroke-width="1.6" />
<line x1="583.3" y1="164.1" x2="604.7" y2="164.1" stroke="#404040" stroke-width="1.6" />
<line x1="583.3" y1="182.2" x2="604.7" y2="182.2" stroke="#404040" stroke-width="1.6" />
<line x1="595.8" y1="170.3" x2="604.7" y2="170.3" stroke="#404040" stroke-width="1.6" />
<line x1="595.8" y1="176.1" x2="604.7" y2="176.1" stroke="#404040" stroke-width="1.6" />
<path d="M592.7,173.3 H584.2 M587.8,169.8 L584.2,173.3 L587.8,176.8" stroke="#2b79c2" stroke-width="1.7" fill="none" />
<line x1="615.3" y1="164.1" x2="636.7" y2="164.1" stroke="#404040" stroke-width="1.6" />
<line x1="615.3" y1="182.2" x2="636.7" y2="182.2" stroke="#404040" stroke-width="1.6" />
<line x1="627.8" y1="170.3" x2="636.7" y2="170.3" stroke="#404040" stroke-width="1.6" />
<line x1="627.8" y1="176.1" x2="636.7" y2="176.1" stroke="#404040" stroke-width="1.6" />
<path d="M615.3,173.3 H623.8 M620.2,169.8 L623.8,173.3 L620.2,176.8" stroke="#2b79c2" stroke-width="1.7" fill="none" />
<text x="0" y="0" font-family="Liberation Sans" font-size="15" font-weight="400" fill="#404040" transform="translate(585,129.5) rotate(-45)">ab</text>
<path d="M590,135.5 L605,120.8 M599.8,120.8 H605 V126" stroke="#2b79c2" stroke-width="1.6" fill="none" />
<polyline points="612.3,125.5 616.15,129.8 620,125.5" fill="none" stroke="#404040" stroke-width="1.5"/>
<text x="662.3" y="125.4" font-family="Liberation Sans" font-size="15.5" font-weight="400" fill="#404040" >ab</text>
<text x="662.3" y="136" font-family="Liberation Sans" font-size="15.5" font-weight="400" fill="#404040" >c</text>
<path d="M682.2,126.3 C682.8,130 680.5,131.6 677,131.6 H672.5 M676.3,128 L672.5,131.6 L676.3,135.2" stroke="#2b79c2" stroke-width="1.6" fill="none" />
<rect x="659.8" y="162.7" width="21.2" height="21" stroke="#404040" stroke-width="1.5" fill="#fff" />
<line x1="670.3" y1="162.7" x2="670.3" y2="184" stroke="#404040" stroke-width="1.3" />
<rect x="659.8" y="166.6" width="21.2" height="12.6" stroke="#2b79c2" stroke-width="1.8" fill="#eef5fc" />
<path d="M662.8,173 H678.2 M665.8,170 L662.6,173 L665.8,176 M675.2,170 L678.4,173 L675.2,176" stroke="#2b79c2" stroke-width="1.4" fill="none" />
<polyline points="828.5,173.3 832.25,177.8 836,173.3" fill="none" stroke="#404040" stroke-width="1.5"/>
<polyline points="1049.3,125 1053.25,130 1057.2,125" fill="none" stroke="#404040" stroke-width="1.5"/>
<text x="879.2" y="183.8" font-family="Liberation Sans" font-size="27.5" font-weight="400" fill="#404040" transform="translate(879.2,0) scale(0.8,1) translate(-879.2,0)">$</text>
<polyline points="908.3,173.2 912.4,177.8 916.5,173.2" fill="none" stroke="#404040" stroke-width="1.5"/>
<text x="929.2" y="184.0" font-family="Liberation Sans" font-size="28.5" font-weight="400" fill="#404040" transform="translate(929.2,0) scale(0.92,1) translate(-929.2,0)">%</text>
<path d="M974.5,166 C978.5,166 980,169.5 979.2,173.5 C978.2,178.5 974,182.5 969,183.8 L968.5,182.5 C971.5,181 973.8,179 974.5,176.2 C970.8,176.5 968.3,174.5 968.3,171.2 C968.3,168 970.8,166 974.5,166 Z" stroke="none" stroke-width="0" fill="#333" />
<path d="M1015.5,168.4 H1003 M1007.5,163.8 L1002.8,168.4 L1007.5,173" stroke="#2b79c2" stroke-width="1.5" fill="none" />
<text x="1017.3" y="174.4" font-family="Liberation Sans" font-size="17" font-weight="400" fill="#404040" transform="translate(1017.3,0) scale(0.8,1) translate(-1017.3,0)">0</text>
<text x="1004.8" y="184.8" font-family="Liberation Sans" font-size="16" font-weight="400" fill="#404040" transform="translate(1004.8,0) scale(0.92,1) translate(-1004.8,0)">.00</text>
<text x="1037.2" y="174.4" font-family="Liberation Sans" font-size="16" font-weight="400" fill="#404040" transform="translate(1037.2,0) scale(0.92,1) translate(-1037.2,0)">.00</text>
<path d="M1034,178.8 H1046.5 M1042,174.2 L1046.7,178.8 L1042,183.4" stroke="#2b79c2" stroke-width="1.5" fill="none" />
<text x="1044.5" y="184.8" font-family="Liberation Sans" font-size="16" font-weight="400" fill="#404040" transform="translate(1044.5,0) scale(0.92,1) translate(-1044.5,0)">.0</text>
<rect x="1121.8" y="107.2" width="40.4" height="31.2" stroke="#404040" stroke-width="1.5" fill="#fff" />
<line x1="1154.7" y1="107.2" x2="1154.7" y2="138.4" stroke="#404040" stroke-width="1.3" />
<line x1="1128.5" y1="107.2" x2="1128.5" y2="138.4" stroke="#404040" stroke-width="1.3" />
<line x1="1148" y1="107.2" x2="1148" y2="138.4" stroke="#404040" stroke-width="1.3" />
<line x1="1121.8" y1="117.8" x2="1162.2" y2="117.8" stroke="#404040" stroke-width="1.3" />
<line x1="1121.8" y1="128" x2="1162.2" y2="128" stroke="#404040" stroke-width="1.3" />
<rect x="1129" y="107" width="18.5" height="10.7" stroke="#c0502a" stroke-width="1.6" fill="#ff9c8f" />
<rect x="1129.3" y="118.8" width="12" height="8.3" stroke="#1f6bb0" stroke-width="1.6" fill="#83b9e9" />
<rect x="1129" y="128.3" width="21" height="10.5" stroke="#c0502a" stroke-width="1.6" fill="#ff9c8f" />
<rect x="1220.9" y="107.2" width="40.4" height="31.2" stroke="#404040" stroke-width="1.5" fill="#fff" />
<rect x="1234.1" y="117.8" width="27.2" height="20.6" stroke="none" stroke-width="0" fill="#83b9e9" />
<line x1="1234.1" y1="107.2" x2="1234.1" y2="117.8" stroke="#404040" stroke-width="1.3" />
<line x1="1248" y1="107.2" x2="1248" y2="117.8" stroke="#404040" stroke-width="1.3" />
<line x1="1220.9" y1="117.8" x2="1234.1" y2="117.8" stroke="#404040" stroke-width="1.3" />
<line x1="1220.9" y1="128" x2="1234.1" y2="128" stroke="#404040" stroke-width="1.3" />
<path d="M1234.1,138.4 V117.8 H1261.3 M1248,117.8 V138.4 M1234.1,128 H1261.3" stroke="#1f6bb0" stroke-width="1.5" fill="none" />
<path d="M1261.3,118 V138.4 H1234.1" stroke="#1f6bb0" stroke-width="1.5" fill="none" />
<path d="M1262.5,118.5 C1265,117 1266.5,119 1265,121 L1249.5,137.5 L1246.5,135 Z" stroke="#fff" stroke-width="3.5" fill="#fff" />
<path d="M1262.5,118.5 C1265,117 1266.5,119 1265,121 L1249.5,137.5 L1246.5,135 Z" stroke="#404040" stroke-width="1.3" fill="#fff" />
<path d="M1246,134.5 C1241,132.5 1236.5,136 1236,140.5 C1235.5,143 1233.5,144.5 1231,145 C1236,147.5 1244,147 1248,141.5 C1250,139 1249.5,136.5 1246,134.5 Z" stroke="#fff" stroke-width="3" fill="#83b9e9" />
<path d="M1246,134.5 C1241,132.5 1236.5,136 1236,140.5 C1235.5,143 1233.5,144.5 1231,145 C1236,147.5 1244,147 1248,141.5 C1250,139 1249.5,136.5 1246,134.5 Z" stroke="#1f6bb0" stroke-width="1.5" fill="#83b9e9" />
<rect x="1297.8" y="106.9" width="40.2" height="31.7" stroke="#404040" stroke-width="1.5" fill="#fff" />
<line x1="1305" y1="106.9" x2="1305" y2="138.6" stroke="#404040" stroke-width="1.3" />
<line x1="1331.1" y1="106.9" x2="1331.1" y2="138.6" stroke="#404040" stroke-width="1.3" />
<line x1="1297.8" y1="114.7" x2="1338" y2="114.7" stroke="#404040" stroke-width="1.3" />
<line x1="1297.8" y1="131" x2="1338" y2="131" stroke="#404040" stroke-width="1.3" />
<rect x="1305" y="114.7" width="26.1" height="16.3" stroke="#1f6bb0" stroke-width="1.8" fill="#83b9e9" />
<path d="M1339.5,118 C1342,116.5 1343.5,118.5 1342,120.5 L1326,137.5 L1323,135 Z" stroke="#fff" stroke-width="3.5" fill="#fff" />
<path d="M1339.5,118 C1342,116.5 1343.5,118.5 1342,120.5 L1326,137.5 L1323,135 Z" stroke="#404040" stroke-width="1.3" fill="#fff" />
<path d="M1322.5,134.5 C1317.5,132.5 1313,136 1312.5,140.5 C1312,143 1310,144.5 1307.5,145 C1312.5,147.5 1320.5,147 1324.5,141.5 C1326.5,139 1326,136.5 1322.5,134.5 Z" stroke="#fff" stroke-width="3" fill="#83b9e9" />
<path d="M1322.5,134.5 C1317.5,132.5 1313,136 1312.5,140.5 C1312,143 1310,144.5 1307.5,145 C1312.5,147.5 1320.5,147 1324.5,141.5 C1326.5,139 1326,136.5 1322.5,134.5 Z" stroke="#1f6bb0" stroke-width="1.5" fill="#83b9e9" />
<polyline points="1184,183.3 1187.5,187.6 1191,183.3" fill="none" stroke="#404040" stroke-width="1.5"/>
<polyline points="1258.3,183.3 1262.05,187.6 1265.8,183.3" fill="none" stroke="#404040" stroke-width="1.5"/>
<polyline points="1338.8,183.3 1342.4,187.6 1346,183.3" fill="none" stroke="#404040" stroke-width="1.5"/>
<rect x="1382" y="101.8" width="22.2" height="18.8" stroke="#404040" stroke-width="1.5" fill="#fff" />
<line x1="1389.4" y1="101.8" x2="1389.4" y2="120.6" stroke="#404040" stroke-width="1.2" />
<line x1="1396.6" y1="101.8" x2="1396.6" y2="120.6" stroke="#404040" stroke-width="1.2" />
<line x1="1382" y1="106" x2="1404.2" y2="106" stroke="#404040" stroke-width="1.2" />
<line x1="1382" y1="115" x2="1404.2" y2="115" stroke="#404040" stroke-width="1.2" />
<rect x="1389.4" y="106" width="15.2" height="9" stroke="#1f6bb0" stroke-width="1.6" fill="#83b9e9" />
<line x1="1396.6" y1="106" x2="1396.6" y2="115" stroke="#1f6bb0" stroke-width="1.2" />
<path d="M1392,110.5 H1382.5 M1386.8,106 L1382.3,110.5 L1386.8,115" stroke="#fff" stroke-width="3" fill="none" />
<path d="M1392,110.5 H1382.5 M1386.8,106 L1382.3,110.5 L1386.8,115" stroke="#2b79c2" stroke-width="1.5" fill="none" />
<polyline points="1468.6,110 1472.4499999999998,114.8 1476.3,110" fill="none" stroke="#404040" stroke-width="1.5"/>
<path d="M1382.2,141 V135.2 H1404 V141 M1382.2,148.4 V154.2 H1404 V148.4" stroke="#404040" stroke-width="1.5" fill="#fff" />
<rect x="1382.2" y="135.2" width="21.8" height="19" stroke="none" stroke-width="0" fill="#fff" />
<path d="M1382.2,141 V135.2 H1404 V141 M1382.2,148.4 V154.2 H1404 V148.4" stroke="#404040" stroke-width="1.5" fill="none" />
<line x1="1389.3" y1="135.2" x2="1389.3" y2="154.2" stroke="#404040" stroke-width="1.2" />
<line x1="1396.8" y1="135.2" x2="1396.8" y2="154.2" stroke="#404040" stroke-width="1.2" />
<line x1="1382.2" y1="141" x2="1404" y2="141" stroke="#404040" stroke-width="1.2" />
<line x1="1382.2" y1="148.4" x2="1404" y2="148.4" stroke="#404040" stroke-width="1.2" />
<path d="M1386.2,140.8 H1393.2 L1395.2,144.6 L1393.2,148.3 H1386.2 Z" stroke="#1f6bb0" stroke-width="1.5" fill="#83b9e9" />
<path d="M1397.3,141.4 L1404,148.3 M1404,141.4 L1397.3,148.3" stroke="#c0502a" stroke-width="1.5" fill="none" />
<polyline points="1474.5,144 1478.25,148.6 1482,144" fill="none" stroke="#404040" stroke-width="1.5"/>
<path d="M1382.2,173 V170.8 H1385 M1401.5,170.8 H1404 V173" stroke="#404040" stroke-width="1.4" fill="none" />
<rect x="1382.2" y="172.5" width="21.8" height="17.4" stroke="#404040" stroke-width="1.5" fill="#fff" />
<line x1="1387.6" y1="172.5" x2="1387.6" y2="189.9" stroke="#404040" stroke-width="1.2" />
<line x1="1398.2" y1="172.5" x2="1398.2" y2="189.9" stroke="#404040" stroke-width="1.2" />
<line x1="1382.2" y1="176.7" x2="1404" y2="176.7" stroke="#404040" stroke-width="1.2" />
<line x1="1382.2" y1="184.6" x2="1404" y2="184.6" stroke="#404040" stroke-width="1.2" />
<rect x="1387.8" y="176.5" width="10.8" height="8" stroke="#1f6bb0" stroke-width="1.6" fill="#83b9e9" />
<path d="M1385.6,168.9 H1400.6 M1385.6,167 V170.8 M1400.6,167 V170.8" stroke="#2b79c2" stroke-width="1.2" fill="none" />
<polyline points="1472.6,177 1476.3,181.8 1480,177" fill="none" stroke="#404040" stroke-width="1.5"/>
<path d="M1540.8,103.8 V101.2 H1523.6 L1533.5,110.8 L1523.6,120.4 H1540.8 V117.6" stroke="#404040" stroke-width="1.7" fill="none" />
<polyline points="1554.3,110.4 1558.1999999999998,114.6 1562.1,110.4" fill="none" stroke="#404040" stroke-width="1.5"/>
<rect x="1521.1" y="135.4" width="22.2" height="19" stroke="#404040" stroke-width="1.7" fill="#fff" />
<line x1="1521.1" y1="138.2" x2="1543.3" y2="138.2" stroke="#404040" stroke-width="1.1" />
<path d="M1531.3,140.5 V151.5 M1526.8,147 L1531.3,151.5 L1535.8,147" stroke="#2b79c2" stroke-width="1.7" fill="none" />
<polyline points="1550.2,144.5 1554.1,148.6 1558,144.5" fill="none" stroke="#404040" stroke-width="1.5"/>
<path d="M1534.8,168.6 L1542,175.6 L1528.2,189.4 L1521,182.2 Z" stroke="#5a5a5a" stroke-width="1.5" fill="#fff" />
<path d="M1525.8,177.4 L1533,184.6 L1528.2,189.4 L1521,182.2 Z" stroke="#5a5a5a" stroke-width="1.4" fill="#b8b8b8" />
<polyline points="1550.2,178.5 1554.1,182.7 1558,178.5" fill="none" stroke="#404040" stroke-width="1.5"/>
<path d="M1582.6,121.4 L1589.5,103.4 L1596.4,121.4 M1585,115.2 H1594" stroke="#2b79c2" stroke-width="1.7" fill="none" />
<path d="M1583,124.9 H1595 L1583,141.8 H1595.6" stroke="#404040" stroke-width="1.7" fill="none" />
<path d="M1600.8,113.2 H1623.3 V115.5 L1614.5,124.5 V135.6 H1609.6 V124.5 L1600.8,115.5 Z" stroke="#404040" stroke-width="1.6" fill="#fff" />
<polyline points="1619.4,183.2 1623.2,188.3 1627,183.2" fill="none" stroke="#404040" stroke-width="1.5"/>
<circle cx="1674.3" cy="117.3" r="15.2" fill="#fff" stroke="#404040" stroke-width="1.6"/>
<line x1="1663.8" y1="128.6" x2="1647.2" y2="145" stroke="#404040" stroke-width="1.7" />
<polyline points="1689.8,183.2 1693.5,188.3 1697.2,183.2" fill="none" stroke="#404040" stroke-width="1.5"/>
<path d="M1760.3,102.8 H1771.8 L1761.2,120 H1774.6 L1751,143 H1745 L1756.8,127 H1743.2 Z" stroke="#1f6bb0" stroke-width="1.5" fill="#83b9e9" />
<path d="M1886.3,228 L1893.4,220.8 L1900.5,228" stroke="#404040" stroke-width="1.6" fill="none" />
<polygon points="133.8,265.2 141.2,265.2 137.5,269" fill="#555"/>
<rect x="172" y="259.2" width="3" height="2.6" fill="#a6a6a6"/>
<rect x="172" y="265.4" width="3" height="2.6" fill="#a6a6a6"/>
<rect x="172" y="271.59999999999997" width="3" height="2.6" fill="#a6a6a6"/>
<path d="M216.5,260 L233,274 M233,260 L216.5,274" stroke="#c2c2c2" stroke-width="2.4" fill="none" />
<path d="M270.3,268 L276.5,274.2 L288.5,260" stroke="#c2c2c2" stroke-width="3.0" fill="none" />
<path d="M339.5,258.5 C338.5,255.8 334.5,255.5 333,259 C332,261.5 331,266 329.8,271 C329,274.5 328,277.5 325.5,277.5 C324.3,277.5 323.6,276.8 323.6,276" stroke="#585858" stroke-width="1.9" fill="none" />
<path d="M326.3,264.6 H333.8" stroke="#585858" stroke-width="1.5" fill="none" />
<path d="M333.6,265.3 C335.8,264.3 336.8,265.5 337.8,268.5 L339.3,272.8 C340.2,275.3 341.5,275.6 342.8,274.3" stroke="#585858" stroke-width="1.8" fill="none" />
<path d="M342.2,265.6 C341,264.6 339.6,265 338.6,266.8 L335.6,272.8 C334.6,274.8 333.3,275.4 332.3,274.6" stroke="#585858" stroke-width="1.6" fill="none" />
<path d="M1887.5,265.8 L1892.5,271 L1897.5,265.8" stroke="#6b6b6b" stroke-width="2.4" fill="none" />
<polygon points="1892,315.8 1903,315.8 1897.5,310.2" fill="#6b6b6b"/>
<polygon points="1892,934.8 1903.2,934.8 1897.6,940.7" fill="#6b6b6b"/>
<polygon points="1176.1,959.2 1176.1,970.2 1169.9,964.7" fill="#6b6b6b"/>
<polygon points="1868.8,958.9 1868.8,970.1 1875,964.5" fill="#6b6b6b"/>
<polygon points="28.2,959.2 28.2,970.2 22,964.7" fill="#c8c8c8"/>
<polygon points="56.5,959.2 56.5,970.2 62.7,964.7" fill="#b4b4b4"/>
<circle cx="249.9" cy="964.9" r="10.2" fill="none" stroke="#707070" stroke-width="1.4"/>
<path d="M244.3,964.9 H255.5 M249.9,959.3 V970.5" stroke="#707070" stroke-width="1.6" fill="none" />
<rect x="1141" y="958.3" width="2.6" height="2.4" fill="#a6a6a6"/>
<rect x="1141" y="963.5" width="2.6" height="2.4" fill="#a6a6a6"/>
<rect x="1141" y="968.6999999999999" width="2.6" height="2.4" fill="#a6a6a6"/></svg>
</body></html>
